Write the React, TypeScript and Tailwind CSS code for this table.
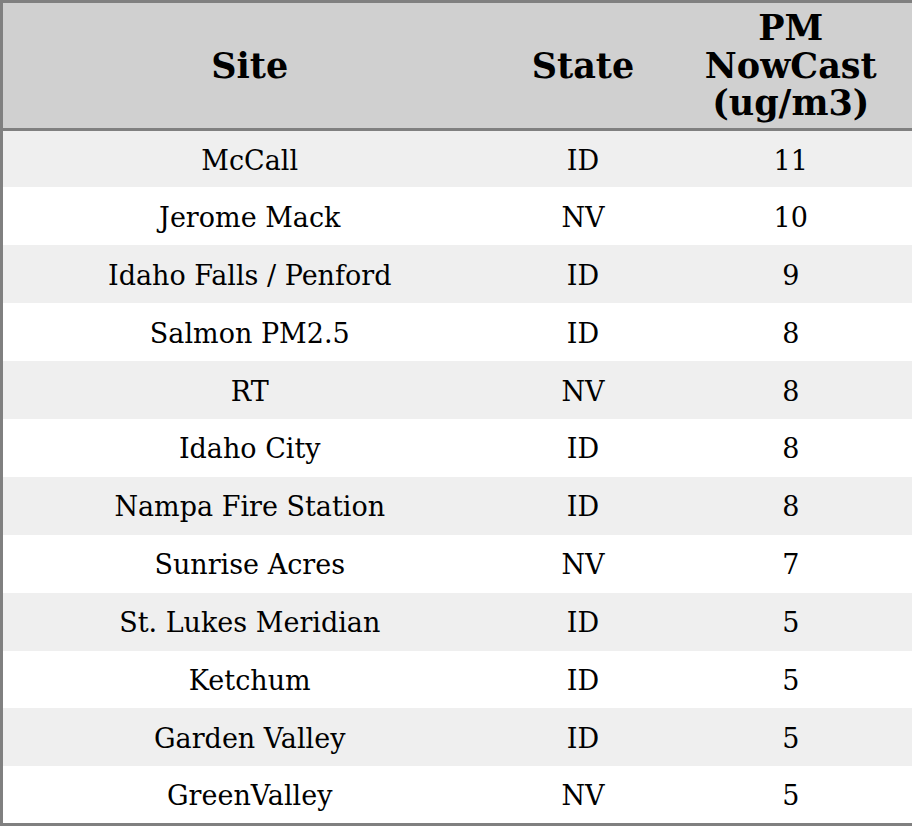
const rows: [string, string, string][] = [
  ["McCall", "ID", "11"],
  ["Jerome Mack", "NV", "10"],
  ["Idaho Falls / Penford", "ID", "9"],
  ["Salmon PM2.5", "ID", "8"],
  ["RT", "NV", "8"],
  ["Idaho City", "ID", "8"],
  ["Nampa Fire Station", "ID", "8"],
  ["Sunrise Acres", "NV", "7"],
  ["St. Lukes Meridian", "ID", "5"],
  ["Ketchum", "ID", "5"],
  ["Garden Valley", "ID", "5"],
  ["GreenValley", "NV", "5"],
];

export default function App() {
  return (
    <div className="w-[912px] h-[827px] bg-white font-['DejaVu_Serif',serif] text-black">
      <table className="w-[912px] border-collapse border-[3px] border-[#808080] table-fixed">
        <colgroup>
          <col className="w-[495px]" />
          <col className="w-[173px]" />
          <col className="w-[244px]" />
        </colgroup>
        <thead>
          <tr className="h-[128px] bg-[#d0d0d0] border-b-[3px] border-[#808080]">
            <th className="text-[35px] leading-[37.5px] font-bold text-center">Site</th>
            <th className="text-[35px] leading-[37.5px] font-bold text-center">State</th>
            <th className="text-[35px] leading-[37.5px] font-bold text-center">
              PM
              <br />
              NowCast
              <br />
              (ug/m3)
            </th>
          </tr>
        </thead>
        <tbody>
          {rows.map(([site, state, val], i) => (
            <tr key={site} className={`h-[57.9px] ${i % 2 === 0 ? "bg-[#efefef]" : "bg-white"}`}>
              <td className="pt-[3px] text-[27px] leading-[32px] text-center">{site}</td>
              <td className="pt-[3px] text-[27px] leading-[32px] text-center">{state}</td>
              <td className="pt-[3px] text-[27px] leading-[32px] text-center">{val}</td>
            </tr>
          ))}
        </tbody>
      </table>
    </div>
  );
}
